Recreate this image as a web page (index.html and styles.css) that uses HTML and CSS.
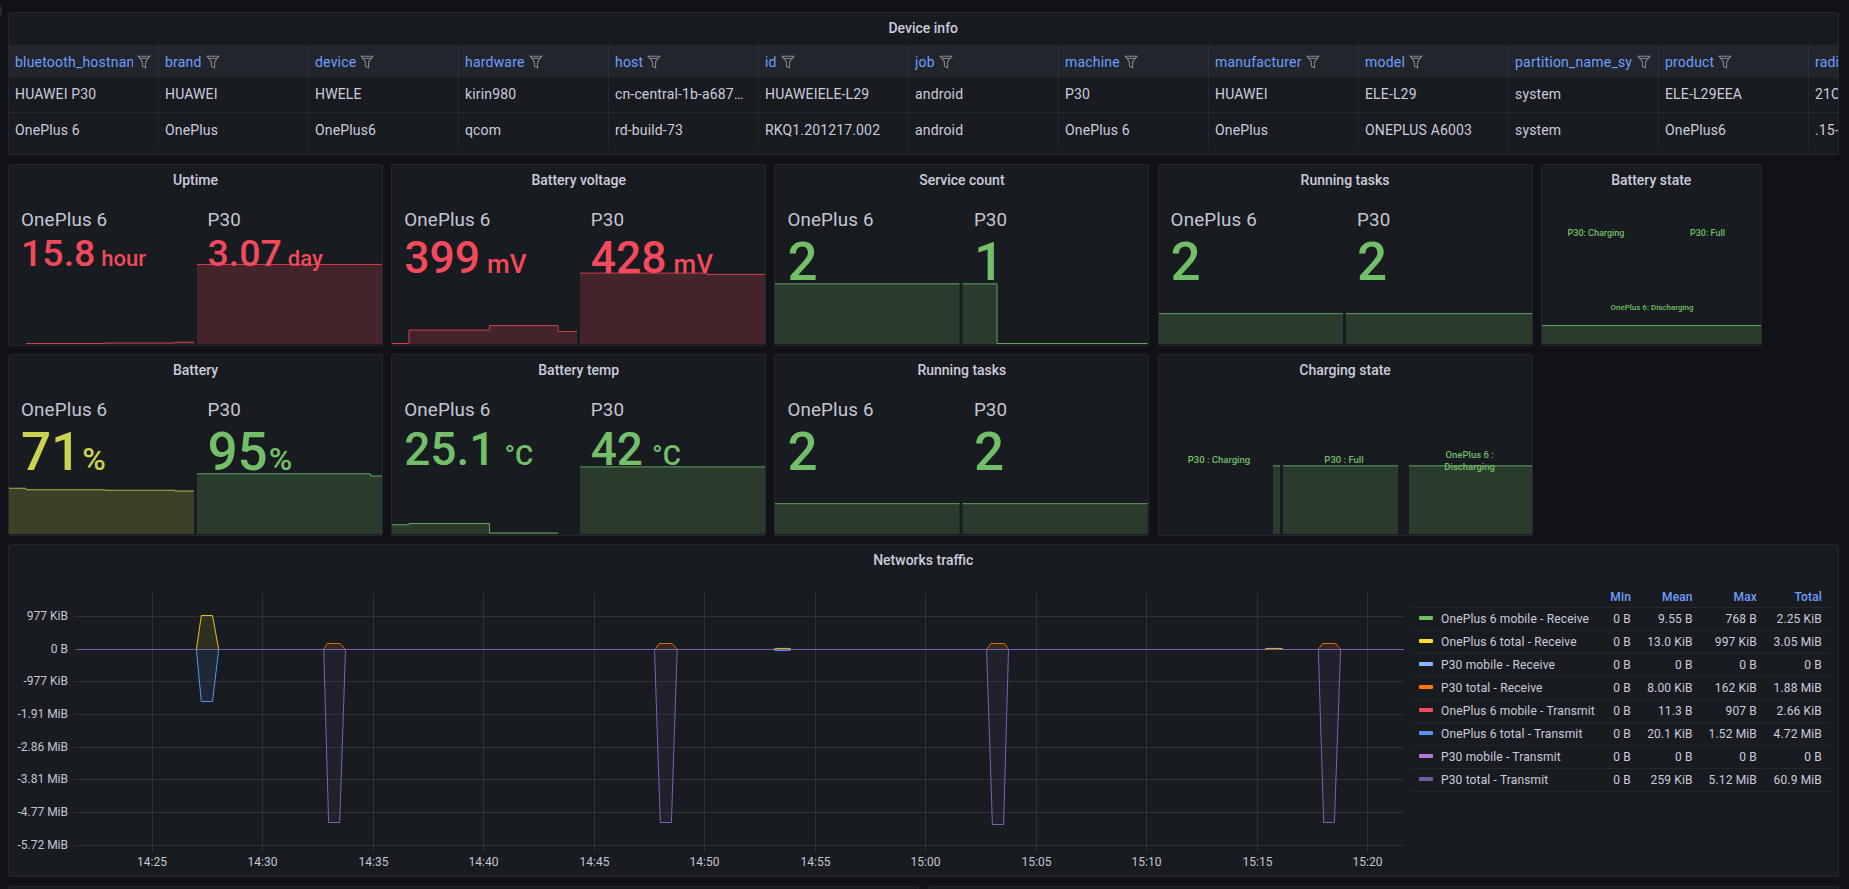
FILE: index.html
```html
<!DOCTYPE html>
<html lang="en">
<head>
<meta charset="utf-8">
<title>Device dashboard</title>
<link rel="stylesheet" href="styles.css">
</head>
<body>
<div class="corner-dot"></div>
<main class="dash">

<section class="panel table-panel">
  <h2 class="title">Device info</h2>
  <div class="table-clip">
  <table class="info">
    <thead><tr>
      <th><div class="th"><span>bluetooth_hostname</span><svg class="funnel" viewBox="0 0 14 14"><path d="M1 1.2h12L8.6 6.6v6.2l-3.2-1.6V6.6z"/><path d="M3.2 3.4h7.6"/></svg></div></th>
      <th><div class="th"><span>brand</span><svg class="funnel" viewBox="0 0 14 14"><path d="M1 1.2h12L8.6 6.6v6.2l-3.2-1.6V6.6z"/><path d="M3.2 3.4h7.6"/></svg></div></th>
      <th><div class="th"><span>device</span><svg class="funnel" viewBox="0 0 14 14"><path d="M1 1.2h12L8.6 6.6v6.2l-3.2-1.6V6.6z"/><path d="M3.2 3.4h7.6"/></svg></div></th>
      <th><div class="th"><span>hardware</span><svg class="funnel" viewBox="0 0 14 14"><path d="M1 1.2h12L8.6 6.6v6.2l-3.2-1.6V6.6z"/><path d="M3.2 3.4h7.6"/></svg></div></th>
      <th><div class="th"><span>host</span><svg class="funnel" viewBox="0 0 14 14"><path d="M1 1.2h12L8.6 6.6v6.2l-3.2-1.6V6.6z"/><path d="M3.2 3.4h7.6"/></svg></div></th>
      <th><div class="th"><span>id</span><svg class="funnel" viewBox="0 0 14 14"><path d="M1 1.2h12L8.6 6.6v6.2l-3.2-1.6V6.6z"/><path d="M3.2 3.4h7.6"/></svg></div></th>
      <th><div class="th"><span>job</span><svg class="funnel" viewBox="0 0 14 14"><path d="M1 1.2h12L8.6 6.6v6.2l-3.2-1.6V6.6z"/><path d="M3.2 3.4h7.6"/></svg></div></th>
      <th><div class="th"><span>machine</span><svg class="funnel" viewBox="0 0 14 14"><path d="M1 1.2h12L8.6 6.6v6.2l-3.2-1.6V6.6z"/><path d="M3.2 3.4h7.6"/></svg></div></th>
      <th><div class="th"><span>manufacturer</span><svg class="funnel" viewBox="0 0 14 14"><path d="M1 1.2h12L8.6 6.6v6.2l-3.2-1.6V6.6z"/><path d="M3.2 3.4h7.6"/></svg></div></th>
      <th><div class="th"><span>model</span><svg class="funnel" viewBox="0 0 14 14"><path d="M1 1.2h12L8.6 6.6v6.2l-3.2-1.6V6.6z"/><path d="M3.2 3.4h7.6"/></svg></div></th>
      <th><div class="th"><span>partition_name_system</span><svg class="funnel" viewBox="0 0 14 14"><path d="M1 1.2h12L8.6 6.6v6.2l-3.2-1.6V6.6z"/><path d="M3.2 3.4h7.6"/></svg></div></th>
      <th><div class="th"><span>product</span><svg class="funnel" viewBox="0 0 14 14"><path d="M1 1.2h12L8.6 6.6v6.2l-3.2-1.6V6.6z"/><path d="M3.2 3.4h7.6"/></svg></div></th>
      <th><div class="th"><span>radio_version</span></div></th>
    </tr></thead>
    <tbody>
      <tr><td>HUAWEI P30</td><td>HUAWEI</td><td>HWELE</td><td>kirin980</td><td>cn-central-1b-a687d9c2</td><td>HUAWEIELE-L29</td><td>android</td><td>P30</td><td>HUAWEI</td><td>ELE-L29</td><td>system</td><td>ELE-L29EEA</td><td>21C20B</td></tr>
      <tr><td>OnePlus 6</td><td>OnePlus</td><td>OnePlus6</td><td>qcom</td><td>rd-build-73</td><td>RKQ1.201217.002</td><td>android</td><td>OnePlus 6</td><td>OnePlus</td><td>ONEPLUS A6003</td><td>system</td><td>OnePlus6</td><td>.15-7</td></tr>
    </tbody>
  </table>
  </div>
</section>

<div class="stat-grid">

  <section class="panel stat-panel">
    <svg class="spark" viewBox="9 165 373 181" preserveAspectRatio="none">
      <path class="f-r" d="M26 345V344.5H105V344H175V343.2H194V345z"/>
      <path class="l-r" d="M26 344.5H105V344H175V343.2H194"/>
      <path class="f-r" d="M197 345V264.7H382V345z"/>
      <path class="l-r" d="M197 265H382"/>
    </svg>
    <h2 class="title">Uptime</h2>
    <div class="cells">
      <div class="cell"><div class="name">OnePlus 6</div><div class="val red s38">15.8<span class="unit u-hour">hour</span></div></div>
      <div class="cell"><div class="name">P30</div><div class="val red s38">3.07<span class="unit u-hour">day</span></div></div>
    </div>
  </section>

  <section class="panel stat-panel">
    <svg class="spark" viewBox="392 165 373 181" preserveAspectRatio="none">
      <path class="f-r" d="M392 345V344.5H409V331H489.5V326.5H558V332.5H577V345z"/>
      <path class="l-r" d="M392 344.5H409V331H489.5V326.5H558V332.5H577"/>
      <path class="f-r" d="M580 345V273.7H707V275H766V345z"/>
      <path class="l-r" d="M580 273.7H707V275H766"/>
    </svg>
    <h2 class="title">Battery voltage</h2>
    <div class="cells">
      <div class="cell"><div class="name">OnePlus 6</div><div class="val red s45">399<span class="unit u-mv">mV</span></div></div>
      <div class="cell"><div class="name">P30</div><div class="val red s45">428<span class="unit u-mv">mV</span></div></div>
    </div>
  </section>

  <section class="panel stat-panel">
    <svg class="spark" viewBox="775.5 165 373 181" preserveAspectRatio="none">
      <path class="f-g" d="M775 345V284.5H960V345z"/>
      <path class="l-g" d="M775 284.5H960"/>
      <path class="f-g" d="M963 345V284.5H997.5V344.5H1148V345z"/>
      <path class="l-g" d="M963 284.5H997.5V344.5H1148"/>
    </svg>
    <h2 class="title">Service count</h2>
    <div class="cells">
      <div class="cell"><div class="name">OnePlus 6</div><div class="val green s53">2</div></div>
      <div class="cell"><div class="name">P30</div><div class="val green s53">1</div></div>
    </div>
  </section>

  <section class="panel stat-panel">
    <svg class="spark" viewBox="1159 165 373 181" preserveAspectRatio="none">
      <path class="f-g" d="M1159 345V314.5H1343V345z"/>
      <path class="l-g" d="M1159 314.5H1343"/>
      <path class="f-g" d="M1346 345V314.5H1532V345z"/>
      <path class="l-g" d="M1346 314.5H1532"/>
    </svg>
    <h2 class="title">Running tasks</h2>
    <div class="cells">
      <div class="cell"><div class="name">OnePlus 6</div><div class="val green s53">2</div></div>
      <div class="cell"><div class="name">P30</div><div class="val green s53">2</div></div>
    </div>
  </section>

  <section class="panel stat-panel">
    <svg class="spark" viewBox="1542 165 219 181" preserveAspectRatio="none">
      <path class="f-g" d="M1542 345V326.5H1762V345z"/>
      <path class="l-g" d="M1542 326.5H1762"/>
      <text class="lbl" x="1596" y="236">P30: Charging</text>
      <text class="lbl" x="1707.5" y="236">P30: Full</text>
      <text class="lbl small" x="1652" y="311">OnePlus 6: Discharging</text>
    </svg>
    <h2 class="title">Battery state</h2>
  </section>

  <section class="panel stat-panel">
    <svg class="spark" viewBox="9 355 373 181" preserveAspectRatio="none">
      <path class="f-y" d="M9 535V489H26V490.5H105V491H175V491.8H194V535z"/>
      <path class="l-y" d="M9 489H26V490.5H105V491H175V491.8H194"/>
      <path class="f-g" d="M197 535V474.5H370.5V476.7H382V535z"/>
      <path class="l-g" d="M197 474.5H370.5V476.7H382"/>
    </svg>
    <h2 class="title">Battery</h2>
    <div class="cells">
      <div class="cell"><div class="name">OnePlus 6</div><div class="val yellow s53">71<span class="unit u-pct">%</span></div></div>
      <div class="cell"><div class="name">P30</div><div class="val green s53">95<span class="unit u-pct">%</span></div></div>
    </div>
  </section>

  <section class="panel stat-panel">
    <svg class="spark" viewBox="392 355 373 181" preserveAspectRatio="none">
      <path class="f-g" d="M392 535V525.7H409V524.4H489.5V534H558V535z"/>
      <path class="l-g" d="M392 525.7H409V524.4H489.5V534H558"/>
      <path class="f-g" d="M580 535V467.5H766V535z"/>
      <path class="l-g" d="M580 467.5H766"/>
    </svg>
    <h2 class="title">Battery temp</h2>
    <div class="cells">
      <div class="cell"><div class="name">OnePlus 6</div><div class="val green s46">25.1<span class="unit u-c">°C</span></div></div>
      <div class="cell"><div class="name">P30</div><div class="val green s46">42<span class="unit u-c">°C</span></div></div>
    </div>
  </section>

  <section class="panel stat-panel">
    <svg class="spark" viewBox="775.5 355 373 181" preserveAspectRatio="none">
      <path class="f-g" d="M775 535V504.5H960V535z"/>
      <path class="l-g" d="M775 504.5H960"/>
      <path class="f-g" d="M963 535V504.5H1148V535z"/>
      <path class="l-g" d="M963 504.5H1148"/>
    </svg>
    <h2 class="title">Running tasks</h2>
    <div class="cells">
      <div class="cell"><div class="name">OnePlus 6</div><div class="val green s53">2</div></div>
      <div class="cell"><div class="name">P30</div><div class="val green s53">2</div></div>
    </div>
  </section>

  <section class="panel stat-panel">
    <svg class="spark" viewBox="1159 355 373 181" preserveAspectRatio="none">
      <path class="f-g" d="M1273 535V466.5H1280V535z"/>
      <path class="l-g" d="M1273 466.5H1280"/>
      <path class="f-g" d="M1283 535V466.5H1398V535z"/>
      <path class="l-g" d="M1283 466.5H1398"/>
      <path class="f-g" d="M1409 535V466.5H1532V535z"/>
      <path class="l-g" d="M1409 466.5H1532"/>
      <text class="lbl big" x="1219" y="464">P30 : Charging</text>
      <text class="lbl big" x="1344" y="464">P30 : Full</text>
      <text class="lbl big" x="1469.6" y="459">OnePlus 6 :</text>
      <text class="lbl big" x="1469.6" y="470.5">Discharging</text>
    </svg>
    <h2 class="title">Charging state</h2>
  </section>
</div>

<section class="panel net-panel">
  <h2 class="title">Networks traffic</h2>
  <div class="net-body">
    <svg class="chart" viewBox="9 577 1395 299" preserveAspectRatio="none">
      <g class="grid">
        <path d="M74 616.5H1404M74 649.5H1404M74 681.5H1404M74 714.5H1404M74 747.5H1404M74 779.5H1404M74 812.5H1404M74 845.5H1404"/>
        <path d="M152.5 593V852M262.5 593V852M373.5 593V852M483.5 593V852M594.5 593V852M704.5 593V852M815.5 593V852M925.5 593V852M1036.5 593V852M1146.5 593V852M1257.5 593V852M1367.5 593V852"/>
      </g>
      <g class="ax-y">
        <text x="68" y="619.5">977 KiB</text>
        <text x="68" y="652.5">0 B</text>
        <text x="68" y="684.5">-977 KiB</text>
        <text x="68" y="717.5">-1.91 MiB</text>
        <text x="68" y="750.5">-2.86 MiB</text>
        <text x="68" y="782.5">-3.81 MiB</text>
        <text x="68" y="815.5">-4.77 MiB</text>
        <text x="68" y="848.5">-5.72 MiB</text>
      </g>
      <g class="ax-x">
        <text x="152" y="866">14:25</text>
        <text x="262.5" y="866">14:30</text>
        <text x="373.5" y="866">14:35</text>
        <text x="483.5" y="866">14:40</text>
        <text x="594.5" y="866">14:45</text>
        <text x="704.5" y="866">14:50</text>
        <text x="815.5" y="866">14:55</text>
        <text x="925.5" y="866">15:00</text>
        <text x="1036.5" y="866">15:05</text>
        <text x="1146.5" y="866">15:10</text>
        <text x="1257.5" y="866">15:15</text>
        <text x="1367.5" y="866">15:20</text>
      </g>
      <path class="s-y" d="M196.4 649.5L201.3 615.5H212.5L218.7 649.5z"/>
      <path class="s-b" d="M196.4 649.5L201.3 701.5H212.5L218.7 649.5z"/>
      <path class="s-p" d="M323.7 649.5L328.6 822.5H339.7L345.5 649.5z"/>
      <path class="s-o" d="M323.7 649.5L327.2 643.5H340L345.5 649.5z"/>
      <path class="s-p" d="M654.5 649.5L660.3 822.5H671.4L677.2 649.5z"/>
      <path class="s-o" d="M655 649.5L659.4 643.5H672L677.2 649.5z"/>
      <path class="s-p" d="M986.6 649.5L992.4 824.5H1003.6L1008.5 649.5z"/>
      <path class="s-o" d="M986.6 649.5L991 643.5H1004.5L1008.5 649.5z"/>
      <path class="s-p" d="M1318.3 649.5L1323.7 822.5H1334.4L1340.6 649.5z"/>
      <path class="s-o" d="M1318.3 649.5L1322.5 643.5H1335.5L1340.6 649.5z"/>
      <path class="s-base" d="M76.8 649.5H1404"/>
      <path class="blip-y" d="M774 649L777 648.4H788L791 649M1265 649L1268 648.4H1279L1283 649"/>
      <path class="blip-b" d="M774 650L777 650.6H788L791 650"/>
    </svg>
    <table class="legend">
      <colgroup><col class="c-name"><col class="c-min"><col class="c-mean"><col class="c-max"><col class="c-total"></colgroup>
      <thead><tr><th></th><th>Min</th><th>Mean</th><th>Max</th><th>Total</th></tr></thead>
      <tbody>
        <tr><td><i class="sw sw1"></i>OnePlus 6 mobile - Receive</td><td>0 B</td><td>9.55 B</td><td>768 B</td><td>2.25 KiB</td></tr>
        <tr><td><i class="sw sw2"></i>OnePlus 6 total - Receive</td><td>0 B</td><td>13.0 KiB</td><td>997 KiB</td><td>3.05 MiB</td></tr>
        <tr><td><i class="sw sw3"></i>P30 mobile - Receive</td><td>0 B</td><td>0 B</td><td>0 B</td><td>0 B</td></tr>
        <tr><td><i class="sw sw4"></i>P30 total - Receive</td><td>0 B</td><td>8.00 KiB</td><td>162 KiB</td><td>1.88 MiB</td></tr>
        <tr><td><i class="sw sw5"></i>OnePlus 6 mobile - Transmit</td><td>0 B</td><td>11.3 B</td><td>907 B</td><td>2.66 KiB</td></tr>
        <tr><td><i class="sw sw6"></i>OnePlus 6 total - Transmit</td><td>0 B</td><td>20.1 KiB</td><td>1.52 MiB</td><td>4.72 MiB</td></tr>
        <tr><td><i class="sw sw7"></i>P30 mobile - Transmit</td><td>0 B</td><td>0 B</td><td>0 B</td><td>0 B</td></tr>
        <tr><td><i class="sw sw8"></i>P30 total - Transmit</td><td>0 B</td><td>259 KiB</td><td>5.12 MiB</td><td>60.9 MiB</td></tr>
      </tbody>
    </table>
  </div>
</section>

<div class="next-row">
  <section class="panel next-panel"></section>
  <section class="panel next-panel"></section>
</div>

</main>
</body>
</html>
```
FILE: styles.css
```css
* { box-sizing: border-box; }
html, body { height: 100%; overflow: hidden; }
body {
  margin: 0;
  background: #111217;
  color: #ccccdc;
  font-family: Roboto, "Liberation Sans", sans-serif;
  font-size: 14px;
  letter-spacing: .01071em;
}
.corner-dot {
  position: absolute; left: -14px; top: 2px;
  width: 16px; height: 18px; border-radius: 50%;
  background: #2b2d32;
}
.dash {
  display: flex; flex-direction: column;
  width: 1830.5px;
  margin-left: 8px;
  padding-top: 12px;
}
.panel {
  position: relative;
  background: #181b1f;
  border: 1px solid rgba(204,204,220,.07);
  border-radius: 3px;
}
.title {
  position: relative;
  margin: 0; height: 32px;
  font-size: 14px; font-weight: 500; line-height: 30px;
  letter-spacing: 0;
  text-align: center;
  color: #ccccdc;
}

/* table */
.table-panel { height: 143px; }
.table-clip { overflow: hidden; height: 103px; }
.info { border-collapse: separate; border-spacing: 0; table-layout: fixed; width: 1950px; }
.info th, .info td { width: 150px; padding: 0; border-right: 1px solid rgba(204,204,220,.07); }
.info th { height: 33px; background: #22252b; font-weight: 400; text-align: left; }
.th { display: flex; align-items: center; gap: 4px; padding: 0 7px 0 6px; color: #6e9fff; letter-spacing: .2px; }
.th span { min-width: 0; overflow: hidden; white-space: nowrap; }
.funnel { flex: none; width: 14px; height: 14px; fill: none; stroke: #85868c; stroke-width: 1.1; }
.info td {
  height: 35px; padding: 0 14px 2px 6px;
  white-space: nowrap; overflow: hidden; text-overflow: ellipsis;
}
.info tbody tr:first-child td { border-bottom: 1px solid rgba(204,204,220,.07); }

/* stat panels */
.stat-grid {
  display: grid;
  grid-template-columns: repeat(4, 375px) 221px;
  grid-auto-rows: 182px;
  gap: 8px 8.2px;
  margin-top: 9px;
}
.stat-panel { overflow: hidden; }
.spark { position: absolute; left: 0; top: 0; width: 100%; height: 100%; }
.cells { position: relative; display: flex; }
.cell { flex: 1 1 0; padding-left: 12px; min-width: 0; }
.name { margin-top: 11px; font-size: 18.8px; line-height: 24px; color: #c6c6d3; white-space: nowrap; }
.val { font-weight: 500; white-space: nowrap; margin-top: 4px; letter-spacing: 0; }
.s38 { font-size: 37.5px; line-height: 37.5px; margin-top: 3px; }
.s45 { font-size: 44.5px; line-height: 44.5px; }
.s46 { font-size: 46px; line-height: 46px; }
.s53 { font-size: 53px; line-height: 53px; }
.red { color: #f2495c; }
.green { color: #73bf69; }
.yellow { color: #cbd24f; }
.unit { font-weight: 500; margin-left: 6px; }
.u-hour { font-size: 22px; }
.u-mv { font-size: 26px; margin-left: 7px; }
.u-c { font-size: 28px; margin-left: 9px; }
.u-pct { font-size: 32px; margin-left: 1px; }

.f-g { fill: rgba(115,191,105,.2); stroke: none; }
.f-r { fill: rgba(242,73,92,.2); stroke: none; }
.f-y { fill: rgba(205,213,76,.2); stroke: none; }
.l-g, .l-r, .l-y { fill: none; stroke-width: 1; }
.l-g { stroke: #64a65c; }
.l-r { stroke: #d2414f; }
.l-y { stroke: #b0b540; }
.lbl { fill: #73bf69; font-size: 9px; font-weight: 500; text-anchor: middle; letter-spacing: 0; }
.lbl.big { font-size: 9.5px; }
.lbl.small { font-size: 8px; }

/* network panel */
.net-panel { height: 333px; margin-top: 8px; }
.net-body { display: flex; height: 299px; }
.chart { flex: none; width: 1395px; height: 299px; }
.grid path { stroke: rgba(204,204,220,.12); stroke-width: 1; fill: none; }
.ax-y text, .ax-x text { fill: #c6c6d3; font-size: 12px; letter-spacing: 0; }
.ax-y text { text-anchor: end; }
.ax-x text { text-anchor: middle; }
.s-y, .s-b, .s-p, .s-o { stroke-width: 1; }
.s-y { stroke: #e0c41f; fill: rgba(250,222,42,.1); }
.s-b { stroke: #5794f2; fill: rgba(87,148,242,.1); }
.s-p { stroke: #7c62b4; fill: rgba(112,93,160,.1); }
.s-o { stroke: #e0690a; fill: rgba(255,120,10,.12); }
.s-base { stroke: #7c62b4; stroke-width: 1; fill: none; }
.blip-y { stroke: #e0c41f; stroke-width: 1; fill: none; }
.blip-b { stroke: #5794f2; stroke-width: 1; fill: none; }

.legend {
  flex: none; align-self: flex-start;
  table-layout: fixed; width: 419px; margin: 12px 0 0 7px;
  border-collapse: collapse;
  font-size: 12px;
}
.c-name { width: 192px; }
.c-min { width: 28px; }
.c-mean { width: 61.7px; }
.c-max { width: 64.3px; }
.c-total { width: 73px; }
.legend th, .legend td {
  padding: 0; text-align: right;
  border-bottom: 1px solid rgba(204,204,220,.07);
  white-space: nowrap;
}
.legend th { height: 18px; padding-bottom: 2px; color: #6e9fff; font-weight: 500; }
.legend td { height: 23px; }
.legend th:last-child, .legend td:last-child { padding-right: 8px; }
.legend td:first-child { text-align: left; padding-left: 8px; }
.sw { display: inline-block; width: 14px; height: 4px; margin-right: 8px; border-radius: 1px; vertical-align: middle; position: relative; top: -1px; }
.sw1 { background: #73bf69; }
.sw2 { background: #fade2a; }
.sw3 { background: #8ab8ff; }
.sw4 { background: #ff780a; }
.sw5 { background: #f2495c; }
.sw6 { background: #5794f2; }
.sw7 { background: #b877d9; }
.sw8 { background: #705da0; }

.next-row { display: flex; gap: 8.5px; margin-top: 9px; }
.next-panel { flex: 1 1 0; height: 40px; }
```
